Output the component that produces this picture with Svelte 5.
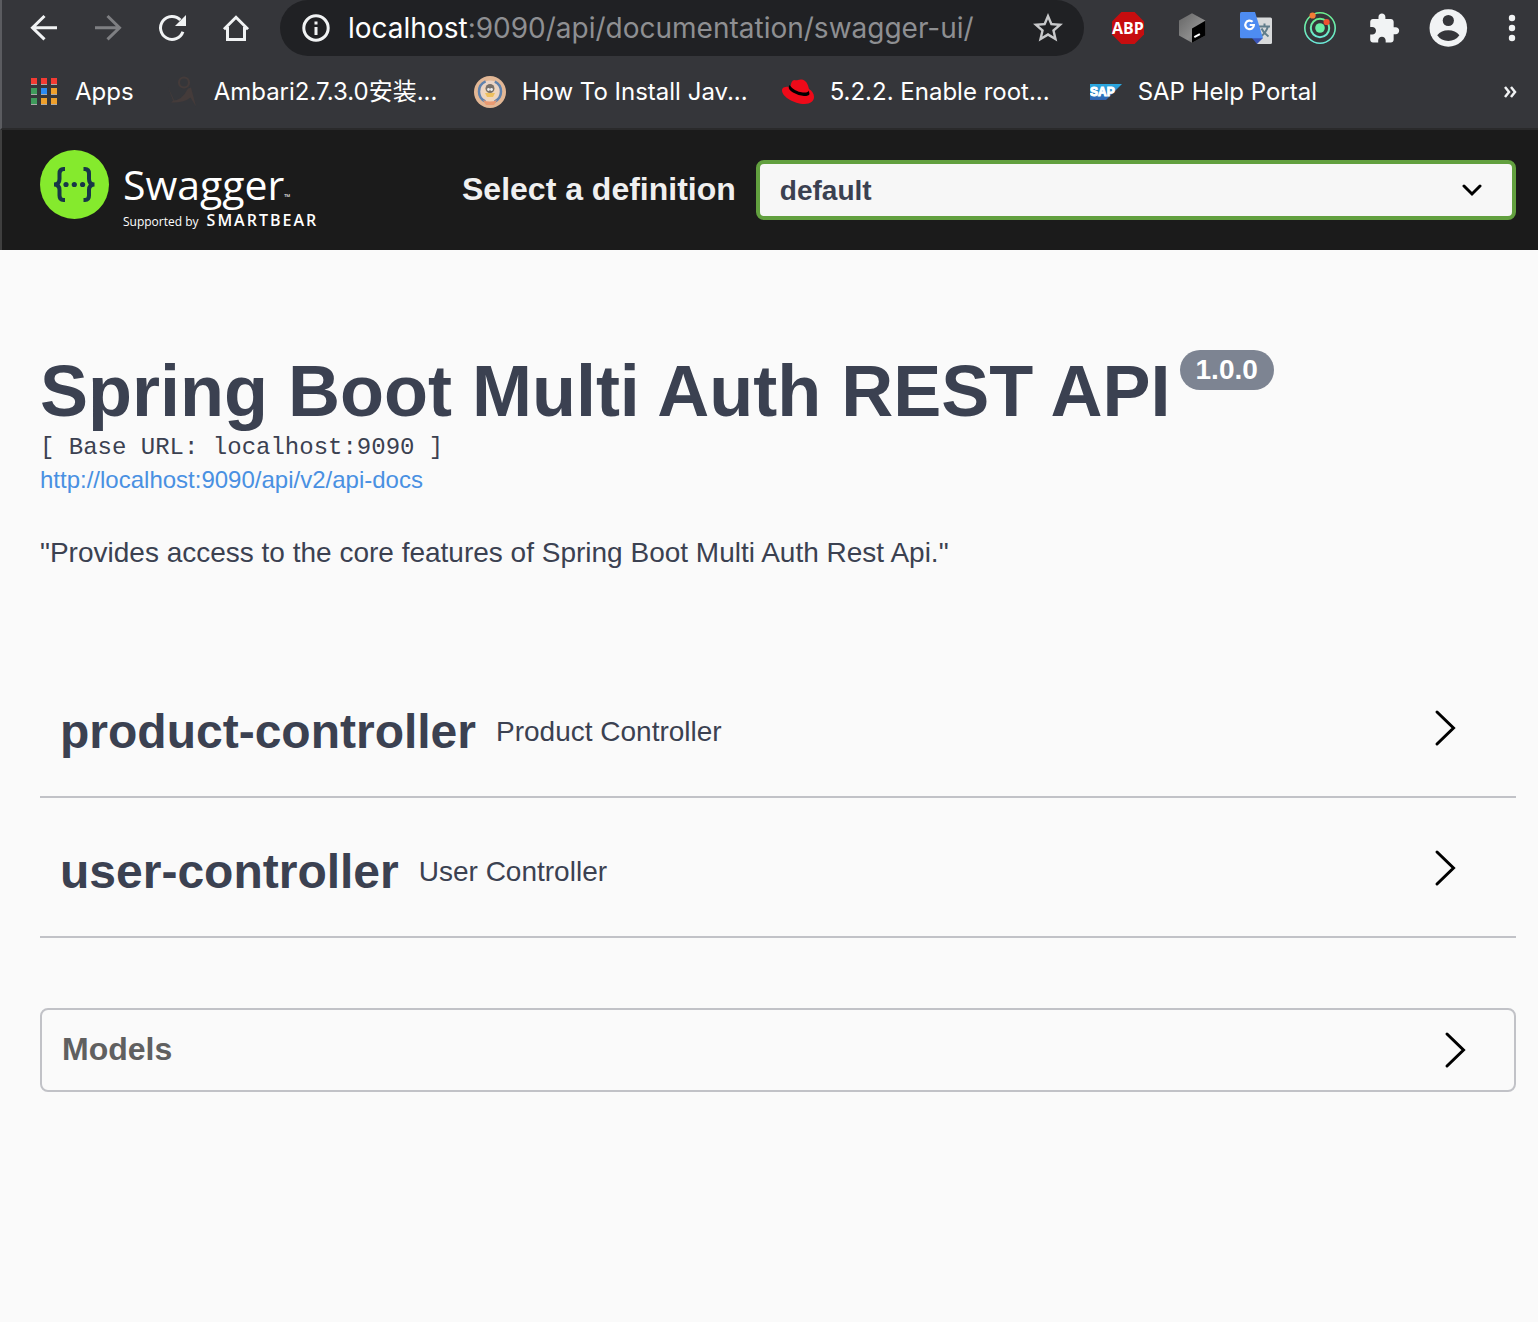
<script>
  const controllers = [
    { name: 'product-controller', description: 'Product Controller' },
    { name: 'user-controller', description: 'User Controller' },
  ];
  const appColors = ['#f43b33', '#f43b33', '#f43b33', '#3f9b5c', '#2c8cf4', '#efa02c', '#3f9b5c', '#efa02c', '#efa02c'];
</script>

<div class="window">
  <div class="browser">
    <div class="toolbar">
      <button class="tool" aria-label="Back">
        <svg viewBox="0 0 40 40"><path class="line" d="M20.5 8 8.5 19.7l12 11.7M8.5 19.7H33" /></svg>
      </button>
      <button class="tool" aria-label="Forward" disabled>
        <svg viewBox="0 0 40 40"><path class="line dim" d="M19.5 8l12 11.7-12 11.7M31.5 19.7H7" /></svg>
      </button>
      <button class="tool" aria-label="Reload">
        <svg viewBox="0 0 40 40">
          <path class="line" d="M28.4 12A11.5 11.5 0 1 0 30.9 23.7" />
          <path class="solid" d="M34 7v11H23z" />
        </svg>
      </button>
      <button class="tool" aria-label="Home">
        <svg viewBox="0 0 40 40">
          <path class="line" d="M8 21.2 20 9.3l12 11.9M11.5 19v12.5h17V19" />
        </svg>
      </button>
      <div class="omnibox">
        <svg class="info" viewBox="0 0 28 28" aria-hidden="true">
          <circle class="line" cx="14" cy="14" r="12.2" />
          <path class="solid" d="M12.5 7.5h3v3h-3zM12.5 13h3v8h-3z" />
        </svg>
        <div class="url"><span class="host">localhost</span>:9090/api/documentation/swagger-ui/</div>
        <button class="star" aria-label="Bookmark this page">
          <svg viewBox="0 0 24 24"><path d="M22 9.24l-7.19-.62L12 2 9.19 8.63 2 9.24l5.46 4.73L5.82 21 12 17.27 18.18 21l-1.63-7.03L22 9.24zM12 15.4l-3.76 2.27 1-4.28-3.32-2.88 4.38-.38L12 6.1l1.71 4.04 4.38.38-3.32 2.88 1 4.28L12 15.4z" /></svg>
        </button>
      </div>
      <button class="tool" aria-label="Adblock Plus">
        <svg viewBox="0 0 40 40">
          <path fill="#c70d0f" d="M13.4 4h13.2L36 13.4v13.2L26.6 36H13.4L4 26.6V13.4z" />
          <text class="abp" x="20" y="26" text-anchor="middle">ABP</text>
        </svg>
      </button>
      <button class="tool" aria-label="Terminal extension">
        <svg viewBox="0 0 40 40">
          <defs>
            <linearGradient id="cube" x1="0" y1="0" x2="1" y2="1">
              <stop offset="0" stop-color="#666" /><stop offset=".6" stop-color="#8c8c8c" /><stop offset="1" stop-color="#555" />
            </linearGradient>
          </defs>
          <path fill="url(#cube)" d="M20 5.2 33.3 12.6v14.8L20 34.8 7 27.4V12.6z" />
          <path fill="#000" d="M33.3 12.8v14.6L20 34.8V20.6z" />
          <path stroke="#fff" stroke-width="2" d="M22.3 29.2l5.6-3" />
        </svg>
      </button>
      <button class="tool" aria-label="Translate">
        <svg viewBox="0 0 40 40">
          <path fill="#d8dadb" d="M18 9.5h16.5q1.5 0 1.5 1.5v23.5q0 1.5-1.5 1.5H21z" />
          <path fill="#3a55b8" d="M16 30h11l-6 6z" />
          <path class="kanji" d="M23 18.5h11M28.5 15.500v3M32 18.5q-2 6-7 10M25.500 20.5q2 4.500 7 8" />
          <path fill="#4e8cf1" d="M5.5 4H19l8 26.3H5.5Q4 30.3 4 28.8V5.5Q4 4 5.5 4z" />
          <path fill="none" stroke="#fff" stroke-width="2.2" d="M16.6 13.8a4.300 4.300 0 1 0 1.300 3.200h-4.200" />
        </svg>
      </button>
      <button class="tool" aria-label="Orbit extension">
        <svg viewBox="0 0 40 40">
          <defs>
            <linearGradient id="orbit" x1="0" y1="0" x2="0" y2="1">
              <stop offset="0" stop-color="#6cf08d" /><stop offset="1" stop-color="#6be8d8" />
            </linearGradient>
          </defs>
          <circle cx="20" cy="20" r="15.2" fill="none" stroke="url(#orbit)" stroke-width="1.6" />
          <circle cx="20" cy="20" r="9.2" fill="none" stroke="url(#orbit)" stroke-width="2" />
          <circle cx="20" cy="20" r="4.8" fill="#6aefa6" />
          <circle cx="12.6" cy="7.5" r="3.1" fill="#f47c36" />
          <circle cx="26.6" cy="14" r="3.1" fill="#ee5131" />
        </svg>
      </button>
      <button class="tool" aria-label="Extensions">
        <svg viewBox="-2.5 -3 29 29"><path class="solid" d="M20.5 11H19V7c0-1.1-.9-2-2-2h-4V3.5C13 2.12 11.88 1 10.5 1S8 2.12 8 3.5V5H4c-1.1 0-1.99.9-1.99 2v3.8H3.5c1.49 0 2.7 1.21 2.7 2.7s-1.21 2.7-2.7 2.7H2V20c0 1.1.9 2 2 2h3.8v-1.5c0-1.49 1.21-2.7 2.7-2.7 1.49 0 2.7 1.21 2.7 2.7V22H17c1.1 0 2-.9 2-2v-4h1.5c1.38 0 2.5-1.12 2.5-2.5S21.88 11 20.5 11z" /></svg>
      </button>
      <button class="tool" aria-label="Profile">
        <svg viewBox="0 0 40 40">
          <circle class="solid" cx="20.3" cy="20" r="18.8" />
          <circle class="hole" cx="20.3" cy="12.5" r="5.6" />
          <path class="hole" d="M9.2 27.3q4-5 11.1-5t11.1 5q-4 5.7-11.1 5.7T9.2 27.3z" />
        </svg>
      </button>
      <button class="tool" aria-label="Menu">
        <svg viewBox="0 0 40 40">
          <circle class="solid" cx="20" cy="10" r="3.2" />
          <circle class="solid" cx="20" cy="20" r="3.2" />
          <circle class="solid" cx="20" cy="30" r="3.2" />
        </svg>
      </button>
    </div>

    <nav class="bookmarks" aria-label="Bookmarks">
      <a href="#apps">
        <svg viewBox="0 0 32 32">
          {#each appColors as color, i}
            <rect x={4 + (i % 3) * 10} y={2 + Math.floor(i / 3) * 10} width="6" height="7" fill="#a9a9a9" />
            <rect x={4 + (i % 3) * 10} y={2 + Math.floor(i / 3) * 10} width="6" height="6" fill={color} />
          {/each}
        </svg>
        <span>Apps</span>
      </a>
      <a href="#ambari">
        <svg viewBox="0 0 32 32">
          <circle cx="18" cy="6.5" r="5" fill="none" stroke="#443b3a" stroke-width="2.2" />
          <path fill="#443b3a" d="M2 11l5 13.500q9 0 15-12l3-1 5 19-5.500-9Q18 27 5 26.500L8 24z" />
        </svg>
        <span class="page">Ambari2.7.3.0安装...</span>
      </a>
      <a href="#java">
        <svg viewBox="0 0 32 32">
          <circle cx="16" cy="16" r="16" fill="#e2b795" />
          <circle cx="16" cy="15.5" r="11" fill="#ead4c5" stroke="#5f82ad" stroke-width="2.5" stroke-dasharray="25 9.5" stroke-dashoffset="-22" />
          <ellipse cx="16" cy="16.5" rx="7.5" ry="8.5" fill="#f0d6bb" />
          <ellipse cx="16" cy="12.5" rx="4.5" ry="4.5" fill="#77706a" />
          <circle cx="14.500" cy="13.5" r="1.4" fill="#eee" /><circle cx="17.5" cy="13.5" r="1.4" fill="#eee" />
          <path fill="#edc05f" d="M11 17h10l-2 4h-6z" />
          <path fill="#e99a72" d="M9 24q7 3 14 0l-3 5h-8z" />
        </svg>
        <span class="page">How To Install Jav...</span>
      </a>
      <a href="#root">
        <svg viewBox="0 0 32 32">
          <path fill="#ee0a19" d="M8.5 11C9 7 10 4 12.5 4q2 .7 3.5 0t3.5-.5C24 4 26 8 27 13c3 2 5 4.5 5 8 0 4-3.5 7-9.5 7C12 28 0 20.5 0 14.5 0 11 4 10.5 8.5 11z" />
          <path d="M6.8 10.5Q6 13.5 11 16.5t11 3.5q5 0 5.5-2l-.7-3.5Q26 17 21 16.5 12 15.5 7.500 9z" />
        </svg>
        <span class="page">5.2.2. Enable root...</span>
      </a>
      <a href="#sap">
        <svg viewBox="0 0 32 32">
          <defs>
            <linearGradient id="sap" x1="0" y1="0" x2="0" y2="1">
              <stop offset="0" stop-color="#29abe2" /><stop offset="1" stop-color="#2f5fae" />
            </linearGradient>
          </defs>
          <path fill="url(#sap)" d="M0 8h32L16 24H0z" />
          <text class="sap" x="0" y="20">SAP</text>
        </svg>
        <span class="page">SAP Help Portal</span>
      </a>
      <button class="more" aria-label="More bookmarks">
        <svg viewBox="0 0 16 16"><path class="line" d="M3 3l4 5-4 5M9 3l4 5-4 5" /></svg>
      </button>
    </nav>
  </div>

  <header class="topbar">
    <a class="logo" href="#top" aria-label="Swagger">
      <svg viewBox="0 0 70 70" aria-hidden="true">
        <circle cx="34.5" cy="34.5" r="34.5" fill="#85ea2d" />
        <g fill="none" stroke="#173647" stroke-width="4">
          <path d="M25 19h-1.500Q19.500 19 19.500 23.500V29q0 5.500-5.500 5.500 5.500 0 5.500 5.500v5.500q0 4.500 4 4.500H25" />
          <path d="M43.500 19H45q4 0 4 4.500V29q0 5.500 5.500 5.500Q49 34.500 49 40v5.500Q49 50 45 50h-1.500" />
        </g>
        <g fill="#173647">
          <circle cx="26" cy="34.5" r="2.6" /><circle cx="34.3" cy="34.5" r="2.6" /><circle cx="42.6" cy="34.5" r="2.6" />
        </g>
      </svg>
      <span class="wordmark">
        <span class="brand">Swagger<small>™</small></span>
        <span class="support">Supported by <b>SMARTBEAR</b></span>
      </span>
    </a>
    <label for="definition">Select a definition</label>
    <div class="picker">
      <select id="definition"><option>default</option></select>
      <svg viewBox="0 0 20 20" aria-hidden="true"><path d="M2 6l8 8 8-8" /></svg>
    </div>
  </header>

  <main>
    <section class="intro">
      <h1>Spring Boot Multi Auth REST API<span class="version">1.0.0</span></h1>
      <pre>[ Base URL: localhost:9090 ]</pre>
      <a href="http://localhost:9090/api/v2/api-docs">http://localhost:9090/api/v2/api-docs</a>
      <p>"Provides access to the core features of Spring Boot Multi Auth Rest Api."</p>
    </section>

    <section class="controllers">
      {#each controllers as item}
        <div class="controller">
          <h2>{item.name}</h2>
          <span>{item.description}</span>
          <button class="expand" aria-label="Expand {item.name}">
            <svg viewBox="0 0 40 40"><path d="M11 4l16.5 16L11 36" /></svg>
          </button>
        </div>
      {/each}
    </section>

    <section class="models">
      <h3>Models</h3>
      <button class="expand" aria-label="Expand models">
        <svg viewBox="0 0 40 40"><path d="M11 4l16.5 16L11 36" /></svg>
      </button>
    </section>
  </main>
</div>

<style>
  :global(body) {
    background: #fafafa;
  }
  .window {
    min-height: 100vh;
    font-family: "Liberation Sans", Arial, sans-serif;
    color: #3b4151;
  }
  h1, h2, h3, p, pre {
    margin: 0;
  }
  button {
    padding: 0;
    border: 0;
    background: none;
    color: inherit;
    font: inherit;
  }
  svg {
    display: block;
    flex: none;
  }

  .browser {
    background: #35363a;
    border-left: 2px solid #5b5c60;
    border-bottom: 2px solid #2a2a2b;
    font-family: Inter, "Noto Sans CJK SC", sans-serif;
  }
  .toolbar {
    display: flex;
    align-items: center;
    gap: 24px;
    height: 56px;
    padding: 0 6px 0 22px;
  }
  .tool {
    flex: none;
  }
  .tool svg {
    width: 40px;
    height: 40px;
  }
  .line {
    fill: none;
    stroke: #f1f3f4;
    stroke-width: 3;
  }
  .dim {
    stroke: #7e7f82;
  }
  .solid {
    fill: #f1f3f4;
  }
  .hole {
    fill: #35363a;
  }
  .kanji {
    fill: none;
    stroke: #607d8b;
    stroke-width: 2;
  }
  .abp {
    fill: #fff;
    font: 700 16px "Open Sans", sans-serif;
  }
  .sap {
    fill: #fff;
    stroke: #fff;
    stroke-width: 1;
    font: 700 12px "Liberation Sans", sans-serif;
  }
  .omnibox {
    display: flex;
    flex: 1;
    align-items: center;
    min-width: 0;
    height: 56px;
    padding: 0 18px 0 22px;
    box-sizing: border-box;
    border-radius: 28px;
    background: #202124;
  }
  .info {
    width: 28px;
    height: 28px;
    margin-right: 18px;
  }
  .url {
    flex: 1;
    color: #8e8f92;
    font-size: 28px;
    line-height: 36px;
    white-space: nowrap;
  }
  .host {
    color: #fff;
  }
  .star svg {
    width: 36px;
    height: 36px;
    fill: #c8c9cb;
  }

  .bookmarks {
    display: flex;
    align-items: center;
    gap: 32px;
    height: 72px;
    padding: 0 20px 0 25px;
  }
  .bookmarks a {
    display: flex;
    align-items: center;
    gap: 16px;
    color: #fff;
    font-size: 24px;
    line-height: 32px;
    text-decoration: none;
    white-space: nowrap;
  }
  .bookmarks a svg {
    width: 32px;
    height: 32px;
  }
  .page {
    width: 228px;
  }
  .more {
    margin-left: auto;
  }
  .more svg {
    width: 16px;
    height: 16px;
  }
  .more .line {
    stroke-width: 2.5;
  }

  .topbar {
    display: flex;
    align-items: center;
    height: 120px;
    padding: 0 22px 0 38px;
    border-left: 2px solid #3f3f3f;
    background: #1b1b1b;
  }
  .logo {
    display: flex;
    flex: none;
    gap: 13px;
    width: 422px;
    height: 80px;
    color: #fff;
    font-family: "Open Sans", sans-serif;
    text-decoration: none;
  }
  .logo svg {
    width: 70px;
    height: 70px;
  }
  .wordmark {
    display: flex;
    flex-direction: column;
    padding-top: 12px;
  }
  .brand {
    font-size: 41px;
    line-height: 44px;
  }
  .brand small {
    font-size: 8px;
    line-height: 8px;
  }
  .support {
    display: flex;
    align-items: baseline;
    gap: 8px;
    font-size: 12px;
    line-height: 20px;
    margin-top: 4px;
    white-space: nowrap;
  }
  .support b {
    font-size: 16px;
    font-weight: 600;
    letter-spacing: 2px;
  }
  label {
    flex: none;
    margin: 0 20px 2px 0;
    color: #f0f0f0;
    font-size: 32px;
    font-weight: 700;
    line-height: 40px;
  }
  .picker {
    display: grid;
    flex: 1;
    align-items: center;
  }
  .picker select,
  .picker svg {
    grid-area: 1 / 1;
  }
  .picker select {
    width: 100%;
    height: 60px;
    padding: 0 80px 0 20px;
    border: 4px solid #62a03f;
    border-radius: 8px;
    appearance: none;
    background: #f7f7f7;
    color: #3b4151;
    font: 700 28px "Liberation Sans", Arial, sans-serif;
  }
  .picker svg {
    justify-self: end;
    width: 20px;
    height: 20px;
    margin-right: 34px;
    fill: none;
    stroke: #000;
    stroke-width: 3;
    stroke-linecap: round;
    pointer-events: none;
  }

  main {
    padding: 100px 22px 100px 40px;
  }
  .intro {
    padding-bottom: 88px;
  }
  h1 {
    display: flex;
    align-items: flex-start;
    gap: 9px;
    font-size: 72px;
    line-height: 82px;
  }
  .version {
    padding: 0 16px;
    border-radius: 20px;
    background: #7d8492;
    color: #fff;
    font-size: 28px;
    line-height: 40px;
  }
  pre {
    font: 24px/32px "Liberation Mono", monospace;
  }
  .intro a {
    display: block;
    color: #4990e2;
    font-size: 24px;
    line-height: 32px;
    text-decoration: none;
  }
  .intro p {
    margin-top: 40px;
    font-size: 28px;
    line-height: 34px;
  }
  .controller {
    display: flex;
    align-items: center;
    box-sizing: border-box;
    height: 140px;
    padding: 10px 50px 0 20px;
    border-bottom: 2px solid #c1c2c7;
  }
  h2 {
    margin-right: 20px;
    font-size: 48px;
    line-height: 60px;
  }
  .controller span {
    font-size: 28px;
    line-height: 36px;
  }
  .expand {
    margin-left: auto;
  }
  .controller .expand {
    padding-bottom: 8px;
  }
  .expand svg {
    width: 40px;
    height: 40px;
    fill: none;
    stroke: #000;
    stroke-width: 3;
    stroke-linecap: round;
  }
  .models {
    display: flex;
    align-items: center;
    height: 80px;
    margin-top: 70px;
    padding: 0 38px 0 20px;
    border: 2px solid #c1c2c7;
    border-radius: 8px;
  }
  h3 {
    padding-bottom: 2px;
    color: #606060;
    font-size: 32px;
    line-height: 40px;
  }
</style>
